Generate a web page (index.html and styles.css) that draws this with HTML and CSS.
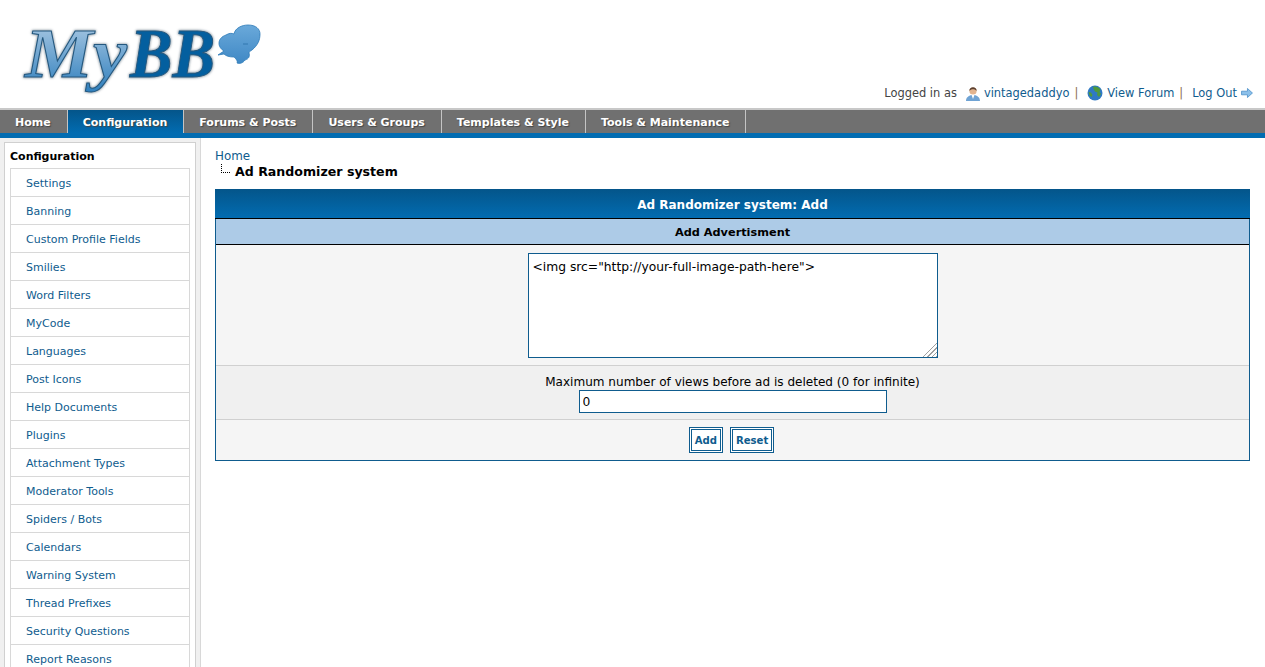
FILE: index.html
```html
<!DOCTYPE html>
<html lang="en">
<head>
    <meta charset="UTF-8">
    <title>Ad Randomizer system</title>
    <link rel="stylesheet" href="styles.css">
</head>
<body>
    <header class="logo-bar">
        <svg class="logo" width="270" height="108" viewBox="0 0 270 108">
            <defs>
                <linearGradient id="my-fill" x1="0" y1="0" x2="0" y2="1">
                    <stop offset="0" stop-color="#b5cfe6"/>
                    <stop offset="1" stop-color="#2f7fbd"/>
                </linearGradient>
                <linearGradient id="bubble-fill" x1="0" y1="0" x2="0" y2="1">
                    <stop offset="0" stop-color="#6aa9da"/>
                    <stop offset="1" stop-color="#3f88c5"/>
                </linearGradient>
            </defs>
            <text class="logo-text" x="25" y="77" textLength="102" lengthAdjust="spacingAndGlyphs" fill="url(#my-fill)">My</text>
            <text class="logo-text" x="130" y="77" textLength="85" lengthAdjust="spacingAndGlyphs" fill="#045f9f">BB</text>
            <path d="M218 55 L224 51 C217 47 217 38 226 35 C229 33 232 33 234 34 C235 28 242 25 248 25 C256 25 260 29 260 34 C260 40 258 45 252 50 C250 51 249 52 249 53 C250 56 249 59 245 60 C243 63 240 64 237 63 C238 61 236 59 234 57 C229 57 226 56 224 54 Z" fill="url(#bubble-fill)" stroke="#2c7ab8" stroke-width="0.800"/>
            <path d="M243 44 H248" stroke="#2a6ea8" stroke-width="0.800"/>
        </svg>
        <div class="user-links">
            <span>Logged in as</span>
            <svg class="icon user-icon" width="16" height="17" viewBox="0 0 16 17">
                <path d="M1 16 C1 12 4 11 6 10 L10 10 C12 11 15 12 15 16 Z" fill="#6fa3d4"/>
                <path d="M6.500 10 L8 14 L9.500 10 Z" fill="#fff"/>
                <circle cx="8" cy="6" r="3.600" fill="#e2b48f"/>
                <path d="M4.400 6 C4 1 12 1 11.600 6 C10 3.500 6 3.500 4.400 6 Z" fill="#5b4030"/>
            </svg>
            <a href="#">vintagedaddyo</a>
            <span class="sep">|</span>
            <svg class="icon globe-icon" width="16" height="16" viewBox="0 0 16 16">
                <circle cx="8" cy="8" r="7.500" fill="#2f79c4"/>
                <path d="M6 1.500 C9 1 12 2 13.500 4.500 L12.500 7 L14 9 L12 12 L10 10 L10.500 7.500 L8 6.500 L6.500 4 Z" fill="#4f9a3c"/>
                <path d="M1.500 7 L4 7.500 L5.500 10 L4.500 12 L2.500 10.500 Z" fill="#4f9a3c"/>
            </svg>
            <a href="#">View Forum</a>
            <span class="sep">|</span>
            <a class="logout" href="#">Log Out</a>
            <svg class="icon" width="12" height="10" viewBox="0 0 13 11">
                <path d="M0.500 3.500 H7 V0.500 L12.500 5.500 L7 10.500 V7.500 H0.500 Z" fill="#8cc0ea" stroke="#3f88c5" stroke-width="0.800"/>
            </svg>
        </div>
    </header>

    <nav class="tabs">
        <a href="#" class="tab">Home</a>
        <a href="#" class="tab active">Configuration</a>
        <a href="#" class="tab">Forums &amp; Posts</a>
        <a href="#" class="tab">Users &amp; Groups</a>
        <a href="#" class="tab">Templates &amp; Style</a>
        <a href="#" class="tab">Tools &amp; Maintenance</a>
    </nav>

    <div class="page">
        <aside class="sidebar">
            <div class="side-box">
                <div class="side-title">Configuration</div>
                <ul class="side-menu">
                    <li><a href="#">Settings</a></li>
                    <li><a href="#">Banning</a></li>
                    <li><a href="#">Custom Profile Fields</a></li>
                    <li><a href="#">Smilies</a></li>
                    <li><a href="#">Word Filters</a></li>
                    <li><a href="#">MyCode</a></li>
                    <li><a href="#">Languages</a></li>
                    <li><a href="#">Post Icons</a></li>
                    <li><a href="#">Help Documents</a></li>
                    <li><a href="#">Plugins</a></li>
                    <li><a href="#">Attachment Types</a></li>
                    <li><a href="#">Moderator Tools</a></li>
                    <li><a href="#">Spiders / Bots</a></li>
                    <li><a href="#">Calendars</a></li>
                    <li><a href="#">Warning System</a></li>
                    <li><a href="#">Thread Prefixes</a></li>
                    <li><a href="#">Security Questions</a></li>
                    <li><a href="#">Report Reasons</a></li>
                </ul>
            </div>
        </aside>

        <main class="content">
            <div class="crumb"><a href="#">Home</a></div>
            <div class="crumb-current"><span class="crumb-line"></span>Ad Randomizer system</div>

            <form class="panel">
                <div class="panel-head">Ad Randomizer system: Add</div>
                <div class="panel-sub">Add Advertisment</div>
                <div class="panel-row row-text">
                    <textarea class="ad-code">&lt;img src="http://your-full-image-path-here"&gt;</textarea>
                </div>
                <div class="panel-row row-views">
                    <label for="views">Maximum number of views before ad is deleted (0 for infinite)</label>
                    <input type="text" id="views" class="views-input" value="0">
                </div>
                <div class="panel-row row-buttons">
                    <button type="button" class="button">Add</button>
                    <button type="reset" class="button">Reset</button>
                </div>
            </form>
        </main>
    </div>
</body>
</html>
```

FILE: styles.css
```css
html, body {
    height: 100%;
    overflow: hidden;
}
body {
    margin: 0;
    font-family: "DejaVu Sans", Verdana, sans-serif;
    font-size: 11px;
    color: #000;
    background: #fff;
    display: flex;
    flex-direction: column;
}
a {
    color: #0f5c8e;
    text-decoration: none;
}

/* top bar */
.logo-bar {
    height: 108px;
    flex: none;
    display: flex;
    justify-content: space-between;
    align-items: flex-end;
}
.logo {
    display: block;
}
.logo-text {
    font-family: "Liberation Serif", serif;
    font-size: 70px;
    font-weight: bold;
    font-style: italic;
    stroke: #24587f;
    stroke-width: 1px;
    filter: drop-shadow(0 0 1px #a8b2ba) drop-shadow(0 0 1px #a8b2ba);
}
.user-links {
    display: flex;
    align-items: center;
    padding: 0 12px 6px 0;
    color: #444;
    font-size: 11.450px;
    line-height: 18px;
}
.icon {
    flex: none;
}
.user-icon {
    margin-left: 8px;
    margin-right: 3px;
}
.globe-icon {
    margin-left: 9px;
    margin-right: 4px;
}
.sep {
    margin-left: 5px;
    color: #8a6d4f;
}
.logout {
    margin-left: 9px;
    margin-right: 4px;
}

/* tabs */
.tabs {
    flex: none;
    display: flex;
    height: 23px;
    background: #707070;
    border-top: 2px solid #c8c8c8;
    border-bottom: 5px solid #026cb1;
}
.tab {
    padding: 0 16px 0 15px;
    border-right: 1px solid #c4c4c4;
    color: #fff;
    font-size: 11px;
    font-weight: bold;
    line-height: 26px;
    text-shadow: 1px 1px 1px #444;
}
.tab.active {
    background: linear-gradient(#04558a, #026cb1);
}

/* sidebar */
.page {
    flex: 1;
    display: flex;
    min-height: 0;
}
.sidebar {
    flex: none;
    width: 192px;
    padding: 4px 4px 0;
    background: #f0f0f0;
    border-right: 1px solid #d8d8d8;
}
.side-box {
    background: #fff;
    border: 1px solid #d0d0d0;
    padding: 0 5px;
}
.side-title {
    height: 25px;
    line-height: 28px;
    font-weight: bold;
    font-size: 11px;
}
.side-menu {
    list-style: none;
    margin: 0;
    padding: 0;
    border: 1px solid #d8d8d8;
    border-bottom: 0;
}
.side-menu li {
    height: 27px;
    border-bottom: 1px solid #d8d8d8;
}
.side-menu a {
    display: block;
    padding-left: 15px;
    line-height: 30px;
}

/* main */
.content {
    flex: 1;
    padding: 11px 15px 0 14px;
}
.crumb {
    height: 15px;
    line-height: 15px;
    font-size: 11.900px;
}
.crumb-current {
    display: flex;
    height: 25px;
    font-size: 12.600px;
    font-weight: bold;
    line-height: 16px;
    padding-left: 6px;
}
.crumb-line {
    width: 8px;
    height: 8px;
    margin: 0 5px 0 0;
    border-left: 1px dotted #000;
    border-bottom: 1px dotted #000;
}
.panel {
    border: 1px solid #0f5c8e;
    border-top: 0;
}
.panel-head {
    height: 29px;
    line-height: 32px;
    margin: 0 -1px;
    background: linear-gradient(#04558a, #026cb1);
    border-bottom: 1px solid #000;
    color: #fff;
    font-size: 12px;
    font-weight: bold;
    text-align: center;
}
.panel-sub {
    height: 25px;
    line-height: 27px;
    background: #adcbe7;
    border-bottom: 1px solid #000;
    color: #000;
    font-size: 11.300px;
    font-weight: bold;
    text-align: center;
}
.panel-row {
    display: flex;
    flex-direction: column;
    align-items: center;
    background: #f5f5f5;
}
.row-text {
    height: 121px;
    padding-top: 8px;
    box-sizing: border-box;
    border-bottom: 1px solid #d0d0d0;
}
.ad-code {
    width: 410px;
    height: 105px;
    box-sizing: border-box;
    margin: 0;
    padding: 6px 4px 4px;
    border: 1px solid #0f5c8e;
    border-radius: 0;
    background: #fff;
    color: #000;
    font-family: "DejaVu Sans", Verdana, sans-serif;
    font-size: 12.300px;
    line-height: 15px;
    outline: 0;
}
.ad-code::-webkit-resizer {
    background:
        linear-gradient(135deg, #fff 50%, transparent 50%),
        repeating-linear-gradient(135deg, transparent 0, transparent 2px, #a0a0a0 2px, #a0a0a0 3px);
}
.row-views {
    height: 54px;
    box-sizing: border-box;
    padding-top: 9px;
    background: #f0f0f0;
    border-bottom: 1px solid #d0d0d0;
    font-size: 12.060px;
    line-height: 15px;
}
.row-views label {
    display: block;
    height: 15px;
}
.views-input {
    width: 308px;
    height: 23px;
    box-sizing: border-box;
    margin: 0;
    padding: 0 3px;
    border: 1px solid #0f5c8e;
    background: #fff;
    font-family: "DejaVu Sans", Verdana, sans-serif;
    font-size: 12.300px;
}
.row-buttons {
    flex-direction: row;
    align-items: flex-start;
    justify-content: center;
    gap: 7px;
    height: 40px;
    padding: 7px 2px 0 0;
    box-sizing: border-box;
}
.button {
    height: 26px;
    margin: 0;
    padding: 0 3px;
    border: 3px double #0f5c8e;
    border-radius: 0;
    background: #fff;
    color: #0f5c8e;
    font-family: "DejaVu Sans", Verdana, sans-serif;
    font-size: 10.100px;
    font-weight: bold;
}
```
